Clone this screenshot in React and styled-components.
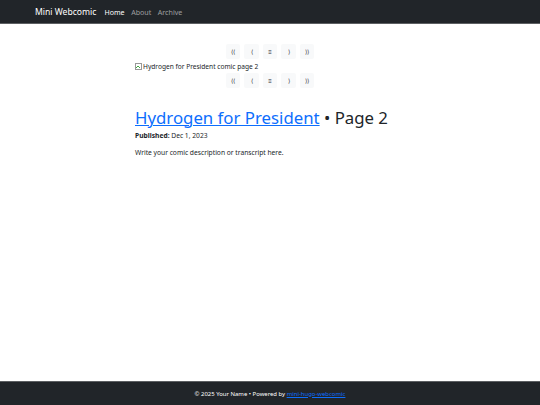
import React from "react";
import styled, { createGlobalStyle } from "styled-components";

const Global = createGlobalStyle`
  html, body { margin: 0; padding: 0; height: 100%; }
  body { font-family: "Noto Sans", "Open Sans", sans-serif; color: #212529; background: #fff; }
  #root { min-height: 100%; }
`;

const Page = styled.div`
  display: flex;
  flex-direction: column;
  min-height: 405px;
`;

const NavBar = styled.nav`
  height: 24px;
  background: #212529;
  border-bottom: 1px solid #5c5f62;
  display: flex;
  align-items: center;
  padding-left: 35px;
  box-sizing: border-box;
`;

const Brand = styled.a`
  color: #fff;
  font-size: 8.6px;
  margin-right: 8px;
  text-decoration: none;
`;

const NavLink = styled.a`
  color: ${(p) => (p.$active ? "#fff" : "rgba(255,255,255,0.55)")};
  font-size: 7.1px;
  margin-right: 6.5px;
  text-decoration: none;
`;

const Main = styled.main`
  flex: 1;
  width: 270px;
  margin: 0 auto;
  padding-top: 20px;
`;

const Pager = styled.div`
  display: flex;
  justify-content: center;
  gap: 4px;
`;

const PagerBtn = styled.span`
  display: inline-flex;
  align-items: center;
  justify-content: center;
  width: 14.5px;
  height: 15px;
  background: #f8f9fa;
  border-radius: 2px;
  font-size: 6px;
  color: #212529;
`;

const ComicAlt = styled.div`
  font-size: 6.6px;
  line-height: 13px;
  padding-top: 1px;
  display: flex;
  align-items: center;
  gap: 1px;
`;

const Title = styled.h1`
  font-size: 16.8px;
  font-weight: 400;
  margin: 20px 0 3px;
  line-height: 1.2;
  white-space: nowrap;
  a { color: #0d6efd; text-decoration: underline; text-decoration-thickness: 1px; }
`;

const Meta = styled.p`
  font-size: 6.7px;
  margin: 0 0 8px;
`;

const Desc = styled.p`
  font-size: 6.7px;
  margin: 0;
`;

const Footer = styled.footer`
  height: 24px;
  background: #212529;
  border-top: 1px solid #5c5f62;
  box-sizing: border-box;
  display: flex;
  align-items: center;
  justify-content: center;
  color: #fff;
  font-size: 5.95px;
  a { color: #0d6efd; }
`;

const Broken = () => (
  <svg width="7" height="7" viewBox="0 0 7 7">
    <rect x="0.5" y="0.5" width="6" height="6" fill="#fff" stroke="#999" />
    <path d="M1 5 L3 3 L5 5" stroke="#4a4" fill="none" />
  </svg>
);

const PagerRow = () => (
  <Pager>
    <PagerBtn>⟨⟨</PagerBtn>
    <PagerBtn>⟨</PagerBtn>
    <PagerBtn>≡</PagerBtn>
    <PagerBtn>⟩</PagerBtn>
    <PagerBtn>⟩⟩</PagerBtn>
  </Pager>
);

export default function App() {
  return (
    <Page>
      <Global />
      <NavBar>
        <Brand>Mini Webcomic</Brand>
        <NavLink $active>Home</NavLink>
        <NavLink>About</NavLink>
        <NavLink>Archive</NavLink>
      </NavBar>
      <Main>
        <PagerRow />
        <ComicAlt><Broken />Hydrogen for President comic page 2</ComicAlt>
        <PagerRow />
        <Title><a href="#">Hydrogen for President</a> • Page 2</Title>
        <Meta><b>Published:</b> Dec 1, 2023</Meta>
        <Desc>Write your comic description or transcript here.</Desc>
      </Main>
      <Footer>
        © 2025 Your Name • Powered by&nbsp;<a href="#">mini-hugo-webcomic</a>
      </Footer>
    </Page>
  );
}
